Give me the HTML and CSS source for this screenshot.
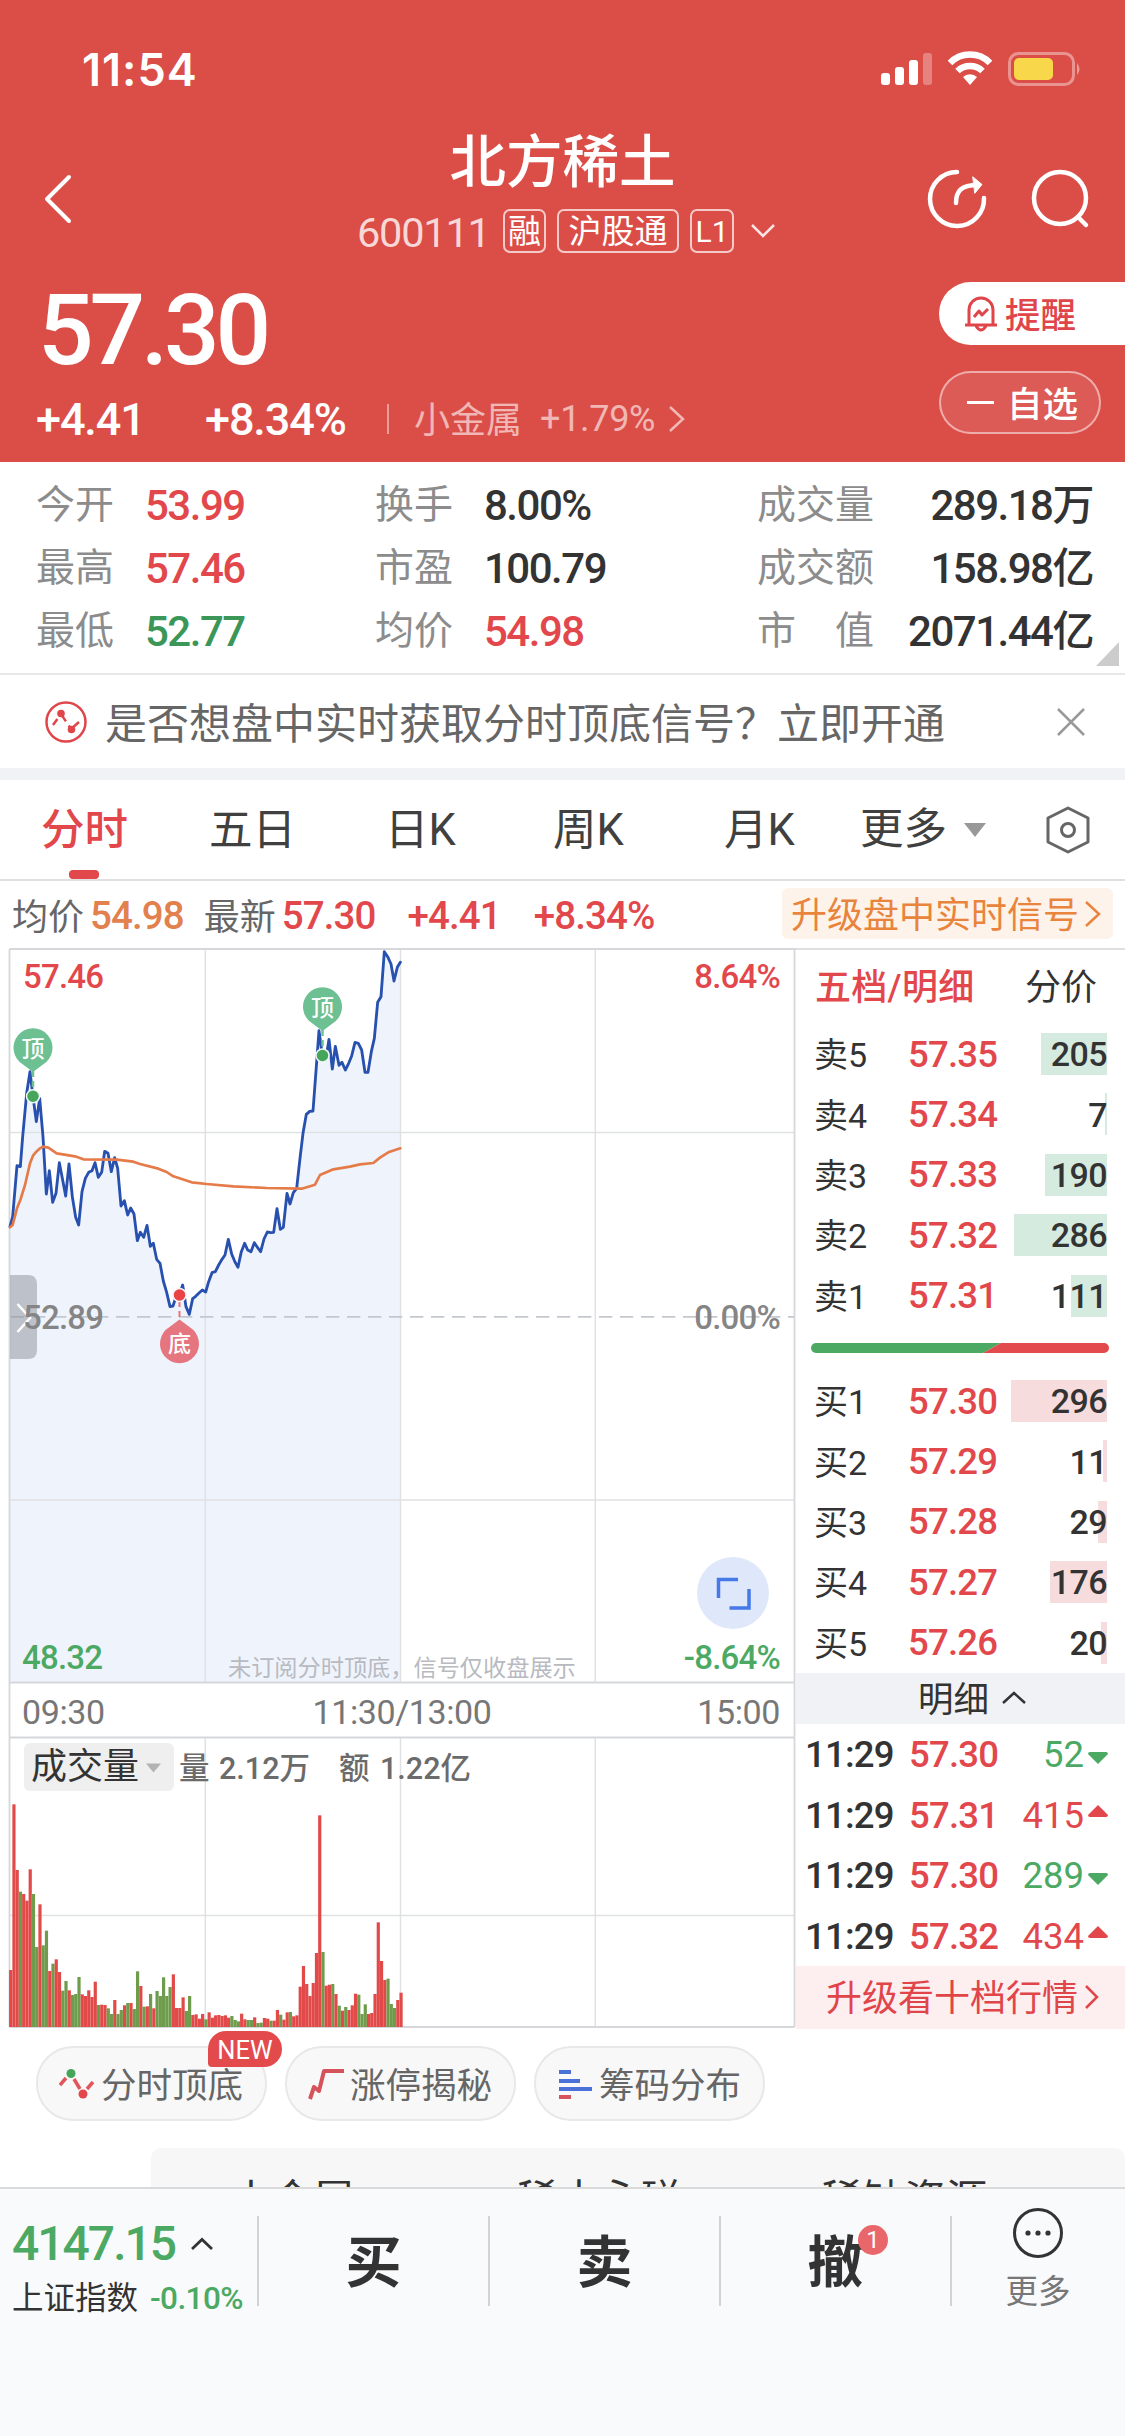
FILE: index.html
```html
<!DOCTYPE html>
<html lang="zh-CN">
<head>
    <meta charset="UTF-8">
    <meta name="viewport" content="width=device-width, initial-scale=1.0">
    <title>北方稀土 600111</title>
    <link rel="stylesheet" href="styles.css">
</head>
<body>
<div class="app">
    <header class="header">
        <div class="status-bar">
            <span class="clock">11:54</span>
            <svg class="status-icons" width="202" height="36" viewBox="0 0 202 36">
                <g fill="#fff">
                    <rect x="1" y="22" width="9" height="12" rx="3"/>
                    <rect x="15" y="16" width="9" height="18" rx="3"/>
                    <rect x="29" y="9" width="9" height="25" rx="3"/>
                    <rect x="43" y="2" width="9" height="32" rx="3" opacity=".3"/>
                </g>
                <g fill="none" stroke="#fff" stroke-width="6.5">
                    <path d="M70 12 A28 28 0 0 1 110 12"/>
                    <path d="M77.500 20 A18 18 0 0 1 102.500 20"/>
                </g>
                <path d="M83 26 A10 10 0 0 1 97 26 L90 34 Z" fill="#fff"/>
                <rect x="129.500" y="2.500" width="64" height="31" rx="9" fill="none" stroke="#fff" stroke-opacity=".4" stroke-width="3"/>
                <rect x="134" y="7" width="39" height="22" rx="5" fill="#f8d84a"/>
                <path d="M197 12 Q202 18 197 24 Z" fill="#fff" opacity=".45"/>
            </svg>
        </div>

        <div class="nav">
            <div class="nav-left">
                <svg width="30" height="50" viewBox="0 0 30 50"><path d="M26 3 L4 25 L26 47" fill="none" stroke="#fff" stroke-width="4" stroke-linecap="round" stroke-linejoin="round"/></svg>
            </div>
            <div class="nav-title">
                <h1>北方稀土</h1>
                <div class="stock-code">
                    <span class="code">600111</span>
                    <span class="tag tag-one">融</span>
                    <span class="tag tag-hgt">沪股通</span>
                    <span class="tag tag-l1">L1</span>
                    <svg width="26" height="18" viewBox="0 0 26 18"><path d="M2 3 L13 14 L24 3" fill="none" stroke="#fff" stroke-opacity=".85" stroke-width="2.500"/></svg>
                </div>
            </div>
            <div class="nav-right">
                <svg width="62" height="62" viewBox="0 0 62 62" fill="none" stroke="#fff" stroke-width="4.500" stroke-linecap="round">
                    <path d="M31 4 A27 27 0 1 0 58 30"/>
                    <path d="M30 35 C30 23 35 17 52 17"/>
                    <path d="M47 9 L56 16.500 L49 25 Z" fill="#fff" stroke-width="1"/>
                </svg>
                <svg width="62" height="62" viewBox="0 0 62 62" fill="none" stroke="#fff" stroke-width="4.500" stroke-linecap="round">
                    <circle cx="30" cy="30" r="26"/>
                    <path d="M48 49 L56 57"/>
                </svg>
            </div>
        </div>

        <div class="quote">
            <div>
                <div class="price">57.30</div>
                <div class="change">
                    <span class="diff">+4.41</span>
                    <span class="percent">+8.34%</span>
                    <span class="bar"></span>
                    <span class="sector">小金属</span>
                    <span class="sector-percent">+1.79%</span>
                    <svg width="18" height="30" viewBox="0 0 18 30"><path d="M2 3 L15 15 L2 27" fill="none" stroke="#fff" stroke-opacity=".6" stroke-width="2.500"/></svg>
                </div>
            </div>
            <div class="actions">
                <div class="remind">
                    <svg width="36" height="38" viewBox="0 0 36 38" fill="none" stroke="#e0454a" stroke-width="3" stroke-linejoin="round">
                        <path d="M6 29 V15 A12 12 0 0 1 30 15 V29 M2 30 H34 M13 31 Q18 39 23 31"/>
                        <path d="M11 22 L16 16 L19 20 L25 14"/>
                    </svg>
                    <span>提醒</span>
                </div>
                <div class="watch"><i></i><span>自选</span></div>
            </div>
        </div>
    </header>

    <section class="stats">
        <div><label>今开</label><b class="red">53.99</b></div>
        <div><label>换手</label><b>8.00%</b></div>
        <div><label>成交量</label><b>289.18万</b></div>
        <div><label>最高</label><b class="red">57.46</b></div>
        <div><label>市盈</label><b>100.79</b></div>
        <div><label>成交额</label><b>158.98亿</b></div>
        <div><label>最低</label><b class="dark-green">52.77</b></div>
        <div><label>均价</label><b class="red">54.98</b></div>
        <div><label>市　值</label><b>2071.44亿</b></div>
    </section>

    <div class="notice">
        <svg width="44" height="44" viewBox="0 0 44 44" fill="none" stroke="#e0454a" stroke-width="2.500">
            <circle cx="22" cy="22" r="19.500"/>
            <path d="M9 25 L17 14 L27 29 L35 22" stroke-width="2.500" stroke-dasharray="7.500 5 10 5 20"/>
            <circle cx="17" cy="13.500" r="3.800" fill="#e0454a" stroke="none"/>
            <circle cx="27.500" cy="29.500" r="3.800" fill="#e0454a" stroke="none"/>
        </svg>
        <p>是否想盘中实时获取分时顶底信号？立即开通</p>
        <svg class="close" width="30" height="30" viewBox="0 0 30 30"><path d="M2 2 L28 28 M28 2 L2 28" stroke="#999" stroke-width="2.500"/></svg>
    </div>

    <nav class="tabs">
        <span class="tab active">分时</span>
        <span class="tab">五日</span>
        <span class="tab">日K</span>
        <span class="tab">周K</span>
        <span class="tab">月K</span>
        <span class="tab more">更多<i class="arrow-down"></i></span>
        <svg class="setting" width="46" height="50" viewBox="0 0 46 50" fill="none" stroke="#666" stroke-width="3" stroke-linejoin="round">
            <path d="M23 3 L43 13 V37 L23 47 L3 37 V13 Z"/>
            <circle cx="23" cy="25" r="6.500"/>
        </svg>
    </nav>

    <div class="info-row">
        <span class="info-label">均价</span><b class="orange">54.98</b>
        <span class="info-label second">最新</span><b class="red">57.30</b>
        <b class="red info-diff">+4.41</b>
        <b class="red info-percent">+8.34%</b>
        <span class="upgrade"><span>升级盘中实时信号</span><svg width="18" height="30" viewBox="0 0 18 30"><path d="M2 3 L15 15 L2 27" fill="none" stroke="#e8843c" stroke-width="2.500"/></svg></span>
    </div>

    <main class="board">
        <svg class="chart" width="796" height="1080" viewBox="0 948 796 1080">
            <!-- filled area and grid -->
            <g transform="translate(0 880) scale(.33333)">
                <path id="area" fill="#eff3fc"/>
            </g>
            <g stroke="#e0e1e3" stroke-width="1.500" fill="none">
                <path d="M9.500 1132.500 H794.500 M9.500 1500 H794.500 M9.500 1915.500 H794.500"/>
                <path d="M205.300 949 V1683 M400.500 949 V1683 M595.300 949 V1683 M205.300 1738 V2027 M400.500 1738 V2027 M595.300 1738 V2027"/>
            </g>
            <g stroke="#d6d7da" stroke-width="1.800" fill="none">
                <path d="M9.500 949 H796 M9.500 1682.500 H794.500 M9.500 1737.500 H794.500 M9.500 2027 H794.500 M9.500 949 V2027 M794.500 949 V2027"/>
            </g>
            <path d="M11 1316.800 H794" stroke="#c4c7ce" stroke-width="1.800" stroke-dasharray="13.300 7.700"/>

            <g transform="translate(0 880) scale(.33333)" fill="none" stroke-linejoin="round" stroke-linecap="round">
                <polyline id="price-line" stroke="#2850ae" stroke-width="8.500"/>
                <polyline stroke="#e57b49" stroke-width="8" points="30,1042 38,1035 51,985 61,960 75,915 90,850 99,827 109,815 120,805 129,800 145,803 170,820 225,829 250,838 350,839 400,845 420,852 475,866 500,876 520,889 575,907 620,912 700,919 800,924 905,926 945,914 960,885 1000,868 1050,860 1080,853 1120,849 1140,833 1165,817 1201,805"/>
            </g>

            <!-- top / bottom signals -->
            <g class="signal">
                <path d="M33 1071 V1090" stroke="#6dc092" stroke-width="2.500" stroke-dasharray="6 4"/>
                <path d="M33 1072 L23 1064.500 A19.500 19.500 0 1 1 43 1064.500 Z" fill="#6dc092"/>
                <circle cx="33" cy="1096.300" r="6.500" fill="#45a55b" stroke="#eef6f4" stroke-width="1.500"/>
                <text x="33" y="1057">顶</text>
                <path d="M322.500 1030 V1050" stroke="#6dc092" stroke-width="2.500" stroke-dasharray="6 4"/>
                <path d="M322.500 1031 L312.500 1023.500 A19.500 19.500 0 1 1 332.500 1023.500 Z" fill="#6dc092"/>
                <circle cx="322.500" cy="1055.500" r="6.500" fill="#45a55b" stroke="#eef6f4" stroke-width="1.500"/>
                <text x="322.500" y="1016">顶</text>
                <path d="M179.500 1301 V1320" stroke="#e5757f" stroke-width="2" stroke-dasharray="6 4"/>
                <path d="M179.500 1319.500 L189.500 1327 A19.500 19.500 0 1 1 169.500 1327 Z" fill="#e5757f"/>
                <circle cx="179.500" cy="1295" r="6.500" fill="#ea4245" stroke="#faf0f2" stroke-width="1.500"/>
                <text x="179.500" y="1352">底</text>
            </g>

            <!-- side handle -->
            <path d="M10 1275 H28 Q37 1275 37 1284 V1350 Q37 1359 28 1359 H10 Z" fill="#8c8f98" opacity=".5"/>
            <path d="M17.500 1304 L30 1318 L17.500 1332" fill="none" stroke="#fff" stroke-width="2.500"/>

            <g class="axis">
                <text x="23" y="987.500" class="fill-red">57.46</text>
                <text x="780" y="987.500" class="fill-red end">8.64%</text>
                <text x="23" y="1328.500" class="fill-gray">52.89</text>
                <text x="780" y="1328.500" class="fill-gray end">0.00%</text>
                <text x="22" y="1668.500" class="fill-green">48.32</text>
                <text x="780" y="1668.500" class="fill-green end">-8.64%</text>
                <text x="22" y="1723.500" class="fill-gray time">09:30</text>
                <text x="402" y="1723.500" class="fill-gray time mid">11:30/13:00</text>
                <text x="780" y="1723.500" class="fill-gray time end">15:00</text>
            </g>
            <text x="228" y="1676" class="watermark">未订阅分时顶底，信号仅收盘展示</text>

            <circle cx="733" cy="1593" r="36" fill="#dfe8fa"/>
            <path d="M718.500 1598 V1579.500 H738 M749 1589 V1608 H729.500" fill="none" stroke="#4678e8" stroke-width="3.500"/>

            <g id="volume"></g>
            <rect x="24" y="1743" width="150" height="48" rx="6" fill="#efefef"/>
            <text x="31" y="1779" class="vol-name">成交量</text>
            <path d="M146 1763.500 H161 L153.500 1772.500 Z" fill="#b3b3b3"/>
            <text x="179" y="1778.500" class="vol-text">量</text>
            <text x="219" y="1778.500" class="vol-text">2.12万</text>
            <text x="339" y="1778.500" class="vol-text">额</text>
            <text x="380" y="1778.500" class="vol-text">1.22亿</text>
        </svg>

        <aside class="book">
            <div class="book-head"><b>五档/明细</b><span>分价</span></div>
            <div class="levels sell" id="sell"></div>
            <svg class="ratio" width="298" height="10" viewBox="0 0 298 10">
                <path d="M5 0 H190 L172 10 H5 A5 5 0 0 1 5 0 Z" fill="#4ca964"/>
                <path d="M190 0 H293 A5 5 0 0 1 293 10 H172 Z" fill="#e34a4d"/>
            </svg>
            <div class="levels buy" id="buy"></div>
            <div class="detail-head"><span>明细</span><svg width="26" height="16" viewBox="0 0 26 16"><path d="M2 13 L13 3 L24 13" fill="none" stroke="#333" stroke-width="2.500"/></svg></div>
            <div class="ticks" id="ticks"></div>
            <div class="ten-levels"><span>升级看十档行情</span><svg width="16" height="26" viewBox="0 0 16 26"><path d="M2 2 L13 13 L2 24" fill="none" stroke="#e0454a" stroke-width="2.500"/></svg></div>
        </aside>
    </main>

    <div class="chips">
        <div class="chip">
            <svg width="36" height="34" viewBox="0 0 36 34" fill="none" stroke-width="3.500">
                <path d="M1 18 L7 11 M15 12 L21 22 M28 22 L34 15" stroke="#e0565b"/>
                <circle cx="12" cy="6.500" r="4.500" fill="#45a55b"/>
                <circle cx="24" cy="27" r="4.500" fill="#e2474c"/>
            </svg>
            <span>分时顶底</span>
            <em class="new">NEW</em>
        </div>
        <div class="chip">
            <svg width="36" height="34" viewBox="0 0 36 34" fill="none" stroke="#d5535a" stroke-width="4" stroke-linejoin="round"><path d="M2 32 L6 20 L11 24 L16 4 H36"/></svg>
            <span>涨停揭秘</span>
        </div>
        <div class="chip">
            <svg width="36" height="34" viewBox="0 0 36 34" stroke="#4a72d8" stroke-width="4">
                <path d="M2 5 H14 M2 14 H23 M2 22 H35"/><path d="M2 30 H14" stroke="#d5535a"/>
            </svg>
            <span>筹码分布</span>
        </div>
    </div>

    <div class="concepts">
        <span>小金属</span><span>稀土永磁</span><span>稀缺资源</span>
    </div>

    <footer class="toolbar">
        <div class="index">
            <div class="index-value">4147.15<svg width="24" height="14" viewBox="0 0 24 14"><path d="M2 12 L12 2.500 L22 12" fill="none" stroke="#333" stroke-width="2.800"/></svg></div>
            <div class="index-name"><span>上证指数</span><b>-0.10%</b></div>
        </div>
        <div class="trade">买</div>
        <div class="trade">卖</div>
        <div class="trade">撤<em class="count">1</em></div>
        <div class="more-btn">
            <svg width="52" height="52" viewBox="0 0 52 52"><circle cx="26" cy="26" r="23.500" fill="none" stroke="#333" stroke-width="3"/><g fill="#333"><circle cx="16" cy="26" r="2.600"/><circle cx="26" cy="26" r="2.600"/><circle cx="36" cy="26" r="2.600"/></g></svg>
            <span>更多</span>
        </div>
    </footer>
</div>
<script src="script.js"></script>
</body>
</html>
```
FILE: styles.css
```css
* {
    margin: 0;
    padding: 0;
    box-sizing: border-box;
}

body {
    width: 1125px;
    background: #fff;
    color: #333;
    font-family: Roboto, "Noto Sans CJK SC", sans-serif;
}

b, em, i {
    font-style: normal;
    font-weight: 500;
}

svg {
    display: block;
    flex-shrink: 0;
}

.app {
    height: 2436px;
    overflow: hidden;
    display: flex;
    flex-direction: column;
    white-space: nowrap;
}

.app > * {
    flex-shrink: 0;
}

.red { color: #e2474c; }
.green { color: #4ca964; }
.dark-green { color: #3b9658; }
.orange { color: #e2814e; }

/* header */
.header {
    height: 462px;
    background: #db4e48;
    color: #fff;
}

.status-bar {
    height: 130px;
    padding: 51px 43px 0 82px;
    display: flex;
    justify-content: space-between;
}

.clock {
    font-family: Inter, sans-serif;
    font-weight: 600;
    font-size: 45px;
    line-height: 37px;
    letter-spacing: 1px;
}

.nav {
    height: 138px;
    display: grid;
    grid-template-columns: 300px 1fr 300px;
}

.nav-left, .nav-right {
    display: flex;
    align-items: center;
}

.nav-left { padding-left: 43px; }

.nav-right {
    padding-left: 101px;
    gap: 42px;
}

.nav-title h1 {
    font-size: 56.5px;
    font-weight: 500;
    line-height: 67px;
    height: 64px;
    text-align: center;
}

.stock-code {
    margin-top: 15px;
    padding-left: 57px;
    height: 44px;
    display: flex;
    align-items: center;
}

.code {
    width: 146px;
    padding-top: 4px;
    font-size: 41.5px;
    letter-spacing: -1.2px;
    color: rgba(255, 255, 255, 0.78);
    line-height: 44px;
}

.tag {
    border: 2px solid rgba(255, 255, 255, 0.7);
    border-radius: 7px;
    height: 44px;
    line-height: 42px;
    font-size: 33px;
    text-align: center;
    margin-right: 11px;
}

.tag-one { width: 43px; }
.tag-hgt { width: 122px; }

.tag-l1 {
    width: 44px;
    font-size: 30px;
    margin-right: 16px;
}

.quote {
    padding: 12px 0 0 36px;
    display: flex;
    justify-content: space-between;
}

.price {
    font-size: 98px;
    font-weight: 500;
    line-height: 101px;
    height: 100px;
    letter-spacing: -4.2px;
    padding-left: 2px;
}

.change {
    margin-top: 17px;
    height: 44px;
    display: flex;
    align-items: center;
}

.diff, .percent {
    font-size: 45px;
    font-weight: 500;
    letter-spacing: -1.1px;
}

.diff { width: 169px; }
.percent { width: 182px; }

.bar {
    width: 2px;
    height: 30px;
    margin-right: 25px;
    background: rgba(255, 255, 255, 0.45);
}

.sector, .sector-percent {
    font-size: 36px;
    color: rgba(255, 255, 255, 0.6);
}

.sector {
    width: 126px;
    margin-top: -4px;
}

.sector-percent {
    width: 128px;
    letter-spacing: -0.3px;
}

.actions {
    padding-top: 2px;
    width: 186px;
    display: flex;
    flex-direction: column;
    gap: 26px;
    font-size: 35.5px;
    font-weight: 500;
}

.actions span { margin-top: -3px; }

.remind, .watch {
    height: 63px;
    display: flex;
    align-items: center;
}

.remind {
    padding-left: 24px;
    gap: 6px;
    background: #fff;
    color: #e0454a;
    border-radius: 32px 0 0 32px;
}

.watch {
    width: 162px;
    padding-left: 26px;
    border: 2px solid rgba(255, 255, 255, 0.5);
    border-radius: 32px;
    background: rgba(255, 255, 255, 0.08);
}

.watch i {
    width: 27px;
    height: 3px;
    margin-right: 13px;
    background: #fff;
}

/* stats */
.stats {
    position: relative;
    height: 213px;
    padding: 10px 32px 0 36px;
    border-bottom: 2px solid #e8e8e8;
    display: grid;
    grid-template-columns: 339px 382px 1fr;
    grid-auto-rows: 63px;
}

.stats::after {
    content: "";
    position: absolute;
    right: 6px;
    bottom: 7px;
    border-style: solid;
    border-width: 0 0 24px 23px;
    border-color: transparent transparent #ccc transparent;
}

.stats > div {
    display: flex;
    align-items: center;
}

.stats label {
    width: 109px;
    margin-top: -6px;
    font-size: 39px;
    color: #8c8c8c;
}

.stats b {
    font-size: 42px;
    letter-spacing: -1.5px;
    line-height: 50px;
    padding-top: 4px;
}

.stats > div:nth-child(3n) b {
    margin-left: auto;
}

/* notice */
.notice {
    height: 105px;
    padding: 0 39px 12px 44px;
    padding-bottom: 0;
    border-bottom: 12px solid #f1f2f6;
    display: flex;
    align-items: center;
    font-size: 42px;
    color: #666;
}

.notice p {
    margin-left: 17px;
    margin-top: -2px;
}

.notice .close { margin-left: auto; }

/* period tabs */
.tabs {
    height: 101px;
    border-bottom: 2px solid #e0e0e0;
    padding-left: 41px;
    display: flex;
    align-items: center;
    font-size: 43.5px;
}

.tab {
    position: relative;
    width: 171px;
    height: 99px;
    line-height: 102px;
    color: #404040;
}

.tab:nth-child(1) { width: 168px; }
.tab:nth-child(2) { width: 176px; }
.tab:nth-child(3) { width: 168px; }
.tab:nth-child(4) { width: 171px; }
.tab:nth-child(5) { width: 136px; }

.tab.active {
    color: #e2474c;
    font-weight: 500;
}

.tab.active::after {
    content: "";
    position: absolute;
    left: 28px;
    bottom: 0;
    width: 30px;
    height: 9px;
    border-radius: 4px;
    background: #e2474c;
}

.tab.more {
    width: 185px;
    display: flex;
    align-items: center;
}

.arrow-down {
    margin-left: 17px;
    border-style: solid;
    border-width: 14px 11px 0 11px;
    border-color: #999 transparent transparent transparent;
}

/* price info */
.info-row {
    height: 67px;
    padding: 2px 12px 0;
    display: flex;
    align-items: center;
    font-size: 38.5px;
    letter-spacing: -0.9px;
}

.info-label {
    font-size: 36px;
    letter-spacing: 0;
    color: #666;
    margin-right: 6px;
    margin-top: -3px;
}

.info-label.second { margin-left: 20px; }
.info-diff { margin-left: 32px; }
.info-percent { margin-left: 33px; }

.upgrade {
    margin-left: auto;
    margin-top: -4px;
    width: 331px;
    height: 51px;
    padding-left: 9px;
    display: flex;
    align-items: center;
    gap: 5px;
    border-radius: 6px;
    background: #fef3ea;
    color: #e8843c;
    font-size: 36px;
    letter-spacing: 0;
}

.upgrade span { margin-top: -3px; }

/* chart */
.board {
    display: flex;
    height: 1080px;
}

.chart text {
    font-family: Roboto, "Noto Sans CJK SC", sans-serif;
}

.signal text {
    fill: #fff;
    font-size: 23px;
    font-weight: 500;
    text-anchor: middle;
}

.axis text {
    font-size: 33px;
    font-weight: 500;
    letter-spacing: -0.8px;
}

.axis .time {
    font-size: 34px;
    font-weight: 400;
    letter-spacing: -0.4px;
}

.axis .end { text-anchor: end; }
.axis .mid { text-anchor: middle; }
.fill-red { fill: #e2474c; }
.fill-gray { fill: #858585; }
.axis .time.fill-gray { fill: #777; }
.fill-green { fill: #4ca964; }

.watermark {
    font-size: 23.2px;
    fill: #b8bac0;
}

.vol-name {
    font-size: 36px;
    fill: #333;
}

.vol-text {
    font-size: 30.5px;
    font-weight: 500;
    fill: #6b6b6b;
}

/* order book */
.book {
    width: 329px;
    border-top: 2px solid #dedfe1;
}

.book-head {
    height: 74px;
    padding: 0 28px 6px 19px;
    display: flex;
    align-items: center;
    justify-content: space-between;
    font-size: 36px;
}

.book-head b {
    color: #e2474c;
    letter-spacing: 0.3px;
}

.level {
    height: 60.4px;
    padding: 0 18px 0 18px;
    display: flex;
    align-items: center;
    position: relative;
}

.level .name {
    width: 94px;
    font-size: 34px;
    margin-top: -3px;
}

.level .cost {
    font-size: 36.5px;
    letter-spacing: -0.8px;
    color: #e2474c;
}

.level .amount {
    position: relative;
    margin-left: auto;
    font-size: 34px;
    letter-spacing: -0.6px;
}

.level .depth {
    position: absolute;
    right: 18px;
    top: 9px;
    height: 42px;
}

.sell .depth { background: #d5ebe0; }
.buy .depth { background: #f7dcdd; }

.ratio { margin: 17px 0 18px 15px; }

.detail-head {
    height: 51px;
    background: #f1f2f5;
    display: flex;
    align-items: center;
    gap: 12px;
    padding-left: 122px;
    font-size: 35.5px;
}

.detail-head span { margin-top: -3px; }

.tick {
    height: 60.5px;
    padding: 1px 16px 0 9px;
    display: flex;
    align-items: center;
    font-size: 36.5px;
    font-weight: 500;
    letter-spacing: -0.8px;
}

.tick span:first-child { width: 104px; }

.tick .amount {
    margin-left: auto;
    margin-right: 3px;
    letter-spacing: 0;
    font-weight: 400;
}

.ten-levels {
    height: 63px;
    padding-left: 30px;
    background: #fdeeef;
    color: #e0454a;
    font-size: 36px;
    display: flex;
    align-items: center;
    gap: 6px;
}

.ten-levels span { margin-top: -4px; }

/* shortcut chips */
.chips {
    padding: 18px 36px 0;
    display: flex;
    gap: 18px;
}

.chip {
    position: relative;
    width: 231px;
    height: 75px;
    padding-left: 21px;
    display: flex;
    align-items: center;
    gap: 6px;
    border: 2px solid #e8e8e8;
    border-radius: 37px;
    background: #f8f8f8;
    font-size: 35.5px;
    color: #666;
}

.chip span { margin-top: -3px; }

.new {
    position: absolute;
    left: 170px;
    top: -17px;
    width: 74px;
    height: 36px;
    border-radius: 18px 18px 18px 4px;
    background: #e24a4c;
    color: #fff;
    font-size: 25.5px;
    font-weight: 400;
    line-height: 39px;
    text-align: center;
}

.concepts {
    margin: 27px 0 0 151px;
    height: 39px;
    padding-top: 28px;
    overflow: hidden;
    border-radius: 10px 10px 0 0;
    background: #f7f7f7;
    display: flex;
    font-size: 41.5px;
    line-height: 50px;
}

.concepts span {
    width: 305px;
    padding-left: 1px;
}

.concepts span:first-child {
    width: 365px;
    padding-left: 79px;
}

/* bottom toolbar */
.toolbar {
    height: 249px;
    padding-top: 27px;
    border-top: 2px solid #dadada;
    background: #f9fafc;
    display: flex;
}

.index {
    width: 257px;
    padding-left: 12px;
}

.index-value {
    display: flex;
    align-items: center;
    gap: 15px;
    font-size: 48px;
    font-weight: 500;
    line-height: 56px;
    letter-spacing: -2px;
    color: #4ca964;
}

.index-name {
    display: flex;
    align-items: center;
    gap: 12px;
    font-size: 31.5px;
    margin-top: 9px;
    line-height: 36px;
}

.index-name b {
    color: #4ca964;
    letter-spacing: -0.6px;
}

.trade {
    position: relative;
    width: 231px;
    height: 90px;
    border-left: 2px solid #d2d3d5;
    text-align: center;
    font-size: 56px;
    font-weight: 700;
    line-height: 94px;
}

.count {
    position: absolute;
    left: 137px;
    top: 9px;
    width: 30px;
    height: 30px;
    border-radius: 50%;
    background: #e9676a;
    color: #fff;
    font-size: 24px;
    font-weight: 400;
    line-height: 31px;
}

.more-btn {
    width: 174px;
    height: 90px;
    border-left: 2px solid #d2d3d5;
    display: flex;
    flex-direction: column;
    align-items: center;
    font-size: 32.5px;
    color: #777;
}

.more-btn svg { margin-top: -9px; }

.more-btn span {
    line-height: 40px;
    margin-top: 13px;
}
```
FILE: script.js
```js
const prices = "30,1040 38,1010 51,857 61,860 68,770 80,640 90,575 99,650 109,725 119,655 129,770 139,942 148,872 158,967 168,940 178,848 188,900 197,948 207,852 217,950 227,1012 236,1035 246,935 256,895 266,877 276,872 285,848 295,892 305,877 314,814 324,820 334,875 344,833 353,865 363,978 373,962 383,1005 392,984 402,1002 412,1082 421,1057 431,1072 441,1036 451,1099 460,1090 470,1138 480,1150 490,1203 500,1237 510,1280 519,1278 529,1247 538,1245 548,1215 558,1280 568,1303 578,1256 587,1249 597,1239 607,1230 617,1236 626,1205 636,1178 646,1175 656,1155 666,1138 675,1125 685,1078 695,1122 705,1146 714,1162 724,1115 734,1090 743,1110 753,1115 763,1088 773,1103 782,1115 792,1077 802,1056 812,1058 821,1057 831,986 841,1048 850,1042 861,940 870,972 880,938 890,925 900,835 909,760 919,703 929,694 939,693 949,560 957,452 967,525 977,540 987,478 997,567 1006,499 1017,556 1026,547 1036,570 1046,550 1055,528 1065,487 1075,490 1085,510 1095,577 1104,577 1114,515 1123,475 1133,367 1143,350 1153,215 1163,230 1173,252 1182,303 1192,262 1201,247";

document.getElementById('price-line').setAttribute('points', prices);
document.getElementById('area').setAttribute('d', `M${prices.split(' ').join(' L')} L1201,2408 L30,2408 Z`);

// volume per minute, r = up, g = down
const volumes = "r171 r668 r471 g406 r399 r379 r473 g399 g240 r368 g245 g289 r168 g190 r203 r165 g109 g138 r110 g96 g99 g150 r98 r93 r110 r90 r136 g66 r67 r66 g56 g39 r81 g39 g51 r65 g72 r72 g54 g167 r123 g61 r62 g99 r56 g108 g93 g149 g93 g120 r158 r57 r57 r89 g48 g93 r36 r38 r25 r39 g23 r44 r28 r35 r36 r33 r35 r28 g33 g21 g17 r40 r23 g21 g21 r29 g12 g13 r27 r25 g19 r19 r51 g37 r22 r44 g45 r32 r35 r121 r183 r129 r93 r132 r222 r635 g225 r124 r127 g129 r99 g64 r49 g60 r51 r65 r100 g97 g39 g68 r39 r42 r99 r314 r198 r141 g145 g69 g57 r81 r103".split(' ');

document.getElementById('volume').innerHTML = volumes.map((v, i) => {
    const h = v.slice(1) / 3;
    const color = v[0] === 'r' ? '#e24a4a' : '#6f9c4c';
    return `<rect x="${(9.1 + i * 3.253).toFixed(2)}" y="${(2027 - h).toFixed(2)}" width="3.2" height="${h.toFixed(2)}" fill="${color}"/>`;
}).join('');

const sell = [['卖5', '57.35', 205, 66], ['卖4', '57.34', 7, 2], ['卖3', '57.33', 190, 62], ['卖2', '57.32', 286, 93], ['卖1', '57.31', 111, 36]];
const buy = [['买1', '57.30', 296, 96], ['买2', '57.29', 11, 4], ['买3', '57.28', 29, 9], ['买4', '57.27', 176, 57], ['买5', '57.26', 20, 6]];

function showLevels(id, rows) {
    document.getElementById(id).innerHTML = rows.map(([name, cost, amount, depth]) => `
        <div class="level">
            <span class="name">${name}</span>
            <b class="cost">${cost}</b>
            <i class="depth" style="width:${depth}px"></i>
            <b class="amount">${amount}</b>
        </div>
    `).join('');
}

showLevels('sell', sell);
showLevels('buy', buy);

const ticks = [['57.30', 52, 'down'], ['57.31', 415, 'up'], ['57.30', 289, 'down'], ['57.32', 434, 'up']];

document.getElementById('ticks').innerHTML = ticks.map(([cost, amount, dir]) => `
    <div class="tick">
        <span>11:29</span>
        <span class="red">${cost}</span>
        <span class="amount ${dir === 'up' ? 'red' : 'green'}">${amount}</span>
        <svg width="22" height="22" viewBox="0 0 22 22">
            ${dir === 'up' ? '<path d="M11 1 L21 11 Q21 13 19 13 H3 Q1 13 1 11 Z" fill="#e2474c"/>' : '<path d="M11 20 L21 10 Q21 8 19 8 H3 Q1 8 1 10 Z" fill="#4ca964"/>'}
        </svg>
    </div>
`).join('');
```
